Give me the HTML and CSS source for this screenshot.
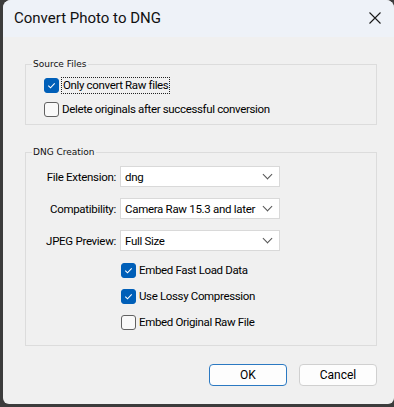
FILE: index.html
```html
<!DOCTYPE html>
<html lang="en">
<head>
    <meta charset="UTF-8">
    <title>Convert Photo to DNG</title>
    <link rel="stylesheet" href="styles.css">
</head>
<body>
    <div class="window">
        <!-- Title bar -->
        <header class="titlebar">
            <span class="title">Convert Photo to DNG</span>
            <svg class="close" width="12" height="12" viewBox="0 0 12 12">
                <path d="M0.5 0.5 L11.5 11.5 M11.5 0.5 L0.5 11.5" stroke="#1a1a1a" stroke-width="1.1" fill="none"/>
            </svg>
        </header>

        <div class="dialog-body">
            <fieldset class="group">
                <legend>Source Files</legend>
                <div class="group-inner source">
                    <label class="check-row">
                        <span class="box checked"></span>
                        <span class="focus">Only convert Raw files</span>
                    </label>
                    <label class="check-row">
                        <span class="box"></span>
                        <span>Delete originals after successful conversion</span>
                    </label>
                </div>
            </fieldset>

            <fieldset class="group creation">
                <legend>DNG Creation</legend>
                <div class="group-inner">
                    <div class="field-grid">
                        <span class="field-label">File Extension:</span>
                        <div class="select"><span>dng</span><i class="chev"></i></div>

                        <span class="field-label">Compatibility:</span>
                        <div class="select"><span>Camera Raw 15.3 and later</span><i class="chev"></i></div>

                        <span class="field-label">JPEG Preview:</span>
                        <div class="select"><span>Full Size</span><i class="chev"></i></div>
                    </div>

                    <div class="options">
                        <label class="check-row">
                            <span class="box checked"></span>
                            <span>Embed Fast Load Data</span>
                        </label>
                        <label class="check-row">
                            <span class="box checked"></span>
                            <span>Use Lossy Compression</span>
                        </label>
                        <label class="check-row">
                            <span class="box"></span>
                            <span>Embed Original Raw File</span>
                        </label>
                    </div>
                </div>
            </fieldset>

            <div class="buttons">
                <button class="btn default">OK</button>
                <button class="btn">Cancel</button>
            </div>
        </div>
    </div>
</body>
</html>
```

FILE: styles.css
```css
:root {
    --window-bg: #f0f0f0;
    --title-bg: #eef2f8;
    --group-border: #dcdcdc;
    --accent: #005fb8;
    --text: #000;
}

body {
    margin: 0;
    background: #3c3c3c;
    font-family: 'Roboto', 'Noto Sans', sans-serif;
    color: var(--text);
    height: 407px;
    overflow: hidden;
}

.window {
    margin-left: 3px;
    width: 391px;
    height: 404px;
    background: var(--window-bg);
    border-radius: 8px 8px 6px 6px;
    overflow: hidden;
    display: flex;
    flex-direction: column;
}

/* Title bar */
.titlebar {
    height: 37px;
    flex-shrink: 0;
    background: var(--title-bg);
    display: flex;
    align-items: center;
    justify-content: space-between;
    padding: 0 13px 0 11px;
}

.title {
    font-size: 15px;
    padding-bottom: 2px;
    color: #111;
}

.close {
    margin-bottom: 2px;
}

/* Body */
.dialog-body {
    padding: 21px 17px 0 22px;
    display: flex;
    flex-direction: column;
}

.group {
    margin: 0;
    border: 1px solid var(--group-border);
    padding: 0;
    min-width: 0;
}

.group legend {
    font-family: 'DejaVu Sans', sans-serif;
    font-size: 9px;
    line-height: 12px;
    padding: 0 1px;
    margin-left: 6px;
    color: #111;
}

.group-inner {
    padding: 8px 0 15px 0;
}

.source {
    padding: 7px 0 7px 18px;
    display: flex;
    flex-direction: column;
    gap: 8px;
}

.creation {
    margin-top: 21px;
}

.check-row {
    display: flex;
    align-items: center;
    gap: 3px;
    font-size: 11.5px;
    letter-spacing: -0.35px;
    height: 16px;
}

.box {
    width: 13px;
    height: 13px;
    border: 1px solid #616161;
    border-radius: 3px;
    background: #f9f9f9;
    flex-shrink: 0;
}

.box.checked {
    background: var(--accent) url("data:image/svg+xml;utf8,<svg xmlns='http://www.w3.org/2000/svg' width='15' height='15' viewBox='0 0 15 15'><path d='M4.3 7.6 L6.5 9.8 L10.7 5.4' stroke='white' stroke-width='1.1' fill='none'/></svg>") center / 15px 15px no-repeat;
    border-color: var(--accent);
}

.focus {
    outline: 1px dotted #222;
    outline-offset: 0;
    padding: 0 1px;
    line-height: 15px;
}

/* Dropdown rows */
.field-grid {
    display: grid;
    grid-template-columns: 90px 160px;
    column-gap: 4px;
    row-gap: 11px;
    align-items: center;
}

.field-label {
    font-size: 11.5px;
    letter-spacing: -0.3px;
    text-align: right;
}

.select {
    height: 19px;
    background: #fff;
    border: 1px solid #d9d9d9;
    display: flex;
    align-items: center;
    justify-content: space-between;
    padding: 0 6px 0 4px;
    font-size: 11.5px;
    letter-spacing: -0.3px;
    white-space: nowrap;
}

.chev {
    width: 6px;
    height: 6px;
    border-right: 1px solid #555;
    border-bottom: 1px solid #555;
    transform: rotate(45deg);
    margin: 0 2px 4px 0;
}

.options {
    margin: 11px 0 0 95px;
    display: flex;
    flex-direction: column;
    gap: 10px;
}

/* Buttons */
.buttons {
    margin-top: 18px;
    display: flex;
    justify-content: flex-end;
    gap: 12px;
}

.btn {
    width: 78px;
    height: 22px;
    background: #fdfdfd;
    border: 1px solid #d0d0d0;
    border-radius: 4px;
    font-family: 'Roboto', sans-serif;
    font-size: 12px;
    padding: 0;
    color: #000;
}

.btn.default {
    border-color: #2b79c2;
}
```
